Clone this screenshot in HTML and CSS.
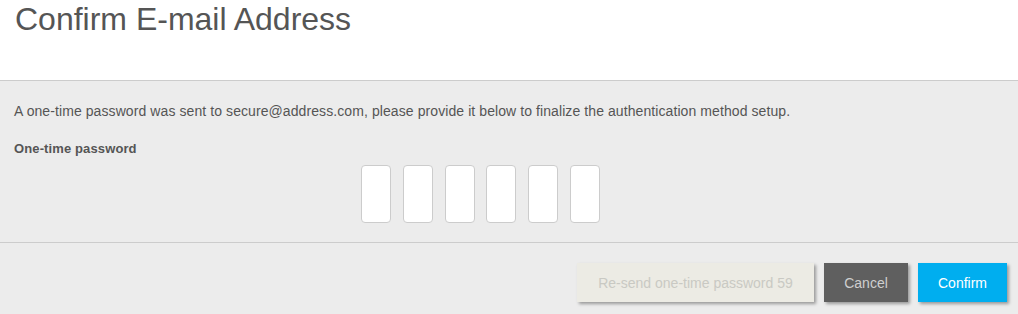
FILE: index.html
```html
<!DOCTYPE html>
<html>
<head>
<meta charset="utf-8">
<link rel="stylesheet" href="styles.css">
</head>
<body>
<div class="dialog">
  <header class="head">
    <h1 class="title">Confirm E-mail Address</h1>
  </header>
  <main class="content">
    <p class="info">A one-time password was sent to secure@address.com, please provide it below to finalize the authentication method setup.</p>
    <div class="label">One-time password</div>
    <div class="otp">
      <input class="digit" type="text" maxlength="1">
      <input class="digit" type="text" maxlength="1">
      <input class="digit" type="text" maxlength="1">
      <input class="digit" type="text" maxlength="1">
      <input class="digit" type="text" maxlength="1">
      <input class="digit" type="text" maxlength="1">
    </div>
  </main>
  <footer class="actions">
    <button class="btn btn-resend" disabled>Re-send one-time password 59</button>
    <button class="btn btn-cancel">Cancel</button>
    <button class="btn btn-confirm">Confirm</button>
  </footer>
</div>
</body>
</html>
```
FILE: styles.css
```css
html, body {
  margin: 0;
  padding: 0;
}
body {
  background: #ececec;
  font-family: "Liberation Sans", Arial, sans-serif;
  color: #555555;
}
.dialog {
  width: 1018px;
  height: 314px;
  display: flex;
  flex-direction: column;
  background: #ececec;
}
.head {
  background: #ffffff;
  border-bottom: 1px solid #cccccc;
  box-sizing: border-box;
  height: 81px;
  padding: 0 15px;
}
.title {
  margin: 0;
  padding-top: 1px;
  font-weight: normal;
  font-size: 32px;
  line-height: 37px;
  color: #555555;
}
.content {
  padding: 0 14px;
  border-bottom: 1px solid #cccccc;
  height: 162px;
  box-sizing: border-box;
}
.info {
  margin: 0;
  padding-top: 21px;
  font-size: 14px;
  letter-spacing: 0.085px;
  line-height: 18px;
}
.label {
  margin-top: 20px;
  font-size: 13px;
  letter-spacing: 0.12px;
  font-weight: bold;
  line-height: 18px;
}
.otp {
  display: flex;
  gap: 11.8px;
  padding-left: 347px;
  margin-top: 7px;
}
.digit {
  width: 30px;
  height: 58px;
  box-sizing: border-box;
  border: 1px solid #cccccc;
  border-radius: 4px;
  background: #ffffff;
  margin: 0;
  padding: 0;
  text-align: center;
  font-size: 20px;
  font-family: inherit;
}
.actions {
  display: flex;
  justify-content: flex-end;
  gap: 10px;
  padding: 20px 11px 0 0;
}
.btn {
  height: 39px;
  padding: 0 20px;
  border: none;
  border-radius: 0;
  font-family: "Liberation Sans", Arial, sans-serif;
  font-size: 14px;
  box-shadow: 2px 2px 3px rgba(0, 0, 0, 0.35);
  cursor: pointer;
}
.btn-resend {
  background: #ecebe4;
  color: #c9c9c3;
  width: 237px;
}
.btn-cancel {
  background: #5f5f5f;
  color: #cfcfcf;
  width: 84px;
}
.btn-confirm {
  background: #00aeef;
  color: #ffffff;
  width: 89px;
}
```
